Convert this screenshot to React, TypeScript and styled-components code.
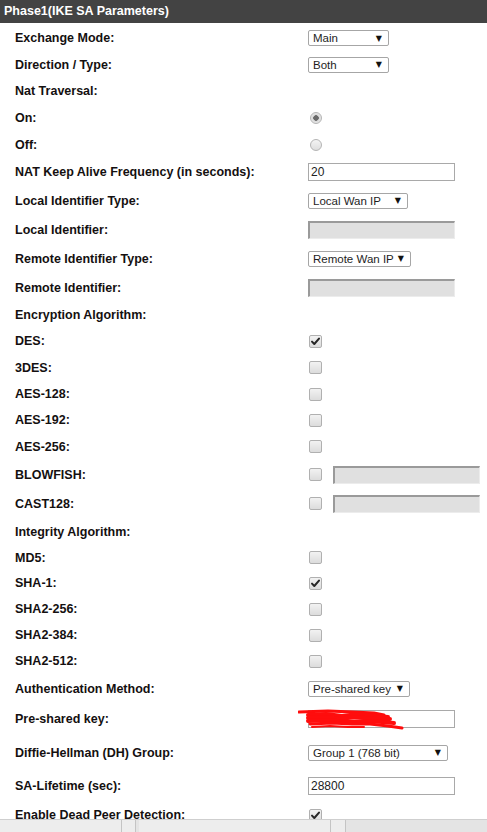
import React from 'react';
import styled, { createGlobalStyle } from 'styled-components';

const GlobalStyle = createGlobalStyle`
    html, body {
        margin: 0;
        padding: 0;
        background: #ffffff;
        overflow: hidden;
    }
    body {
        font-family: 'Liberation Sans', Arial, sans-serif;
    }
`;

const Page = styled.div`
    width: 487px;
    height: 832px;
    overflow: hidden;
`;

const SectionHeader = styled.div`
    height: 23px;
    background: #434343;
    color: #ffffff;
    font-weight: bold;
    font-size: 12.5px;
    line-height: 22px;
    padding-left: 4px;
`;

const Form = styled.div`
    display: flex;
    flex-direction: column;
    padding-top: 2px;
`;

const Row = styled.div<{ height: number }>`
    display: grid;
    grid-template-columns: 293px 1fr;
    align-items: center;
    height: ${(p) => p.height}px;
    padding-left: 15px;
`;

const Label = styled.div`
    font-weight: bold;
    font-size: 12.5px;
    color: #141010;
    white-space: nowrap;
`;

const Cell = styled.div`
    display: flex;
    align-items: center;
    gap: 11px;
`;

const SelectBox = styled.div<{ width: number }>`
    box-sizing: border-box;
    width: ${(p) => p.width}px;
    height: 16px;
    border: 1px solid #a6a6a6;
    border-radius: 2px;
    background: #ffffff;
    display: flex;
    align-items: center;
    justify-content: space-between;
    padding: 0 6px 0 4px;
    font-size: 11.5px;
    color: #1e1e1e;
    white-space: nowrap;
`;

const Arrow = styled.span`
    font-size: 8px;
    color: #111111;
    font-family: 'DejaVu Sans', sans-serif;
`;

const TextInput = styled.input`
    box-sizing: border-box;
    width: 147px;
    height: 18px;
    border: 1px solid #a9a9a9;
    padding: 0 2px;
    margin: 0;
    font-family: 'Liberation Sans', Arial, sans-serif;
    font-size: 12px;
    color: #222222;
    background: #ffffff;
    outline: none;
`;

const DisabledInput = styled.div`
    box-sizing: border-box;
    width: 147px;
    height: 18px;
    background: #e0e0e0;
    border-top: 2px solid #9a9a9a;
    border-left: 2px solid #9a9a9a;
    border-right: 1px solid #ececec;
    border-bottom: 1px solid #ececec;
`;

const Radio = styled.span<{ checked?: boolean }>`
    box-sizing: border-box;
    width: 12px;
    height: 12px;
    margin-left: 2px;
    border-radius: 50%;
    border: 1px solid #b4b4b4;
    background: ${(p) =>
        p.checked
            ? 'radial-gradient(circle, #6a6a6a 0 2.5px, #d8d8d8 3px, #eeeeee 6px)'
            : 'linear-gradient(#f4f4f4, #dedede)'};
`;

const CheckBox = styled.span`
    box-sizing: border-box;
    width: 13px;
    height: 13px;
    margin-left: 1px;
    border: 1px solid #b0b0b0;
    border-radius: 2px;
    background: linear-gradient(#f2f2f2, #dcdcdc);
    display: flex;
    align-items: center;
    justify-content: center;
`;

const KeyWrap = styled.div`
    position: relative;
    display: flex;
`;

const ScribbleSvg = styled.svg`
    position: absolute;
    left: -10px;
    top: -1px;
    pointer-events: none;
`;

const BottomBar = styled.div`
    position: fixed;
    left: 0;
    right: 0;
    bottom: 0;
    height: 12px;
    background: #e4e4e4;
    border-top: 1px solid #cfcfcf;
    display: flex;
`;

const BarCell = styled.div<{ width: number }>`
    width: ${(p) => p.width}px;
    height: 100%;
    background: #ededed;
    border-right: 1px solid #c4c4c4;
`;

const BarGap = styled.div`
    width: 3px;
    height: 100%;
`;

type RowSpec = {
    label: string;
    height: number;
    control?: React.ReactNode;
};

const Select: React.FC<{ value: string; width: number }> = ({ value, width }) => (
    <SelectBox width={width}>
        <span>{value}</span>
        <Arrow>▼</Arrow>
    </SelectBox>
);

const Checkbox: React.FC<{ checked?: boolean }> = ({ checked }) => (
    <CheckBox>
        {checked && (
            <svg width="11" height="11" viewBox="0 0 11 11">
                <path d="M2 5.6 L4.3 8 L9 2.6" fill="none" stroke="#262626" strokeWidth="2" strokeLinecap="round" strokeLinejoin="round" />
            </svg>
        )}
    </CheckBox>
);

const Scribble = () => (
    <ScribbleSvg width="110" height="22" viewBox="0 0 110 22">
        <g stroke="#ff0d0d" fill="none" strokeLinecap="round" strokeLinejoin="round">
            <path d="M1 3 L30 2 L55 3 L76 4 L86 6" strokeWidth="3" />
            <path d="M10 6 L28 5 L44 7 L60 5 L78 7 L90 8" strokeWidth="4" />
            <path d="M10 9 L26 8 L42 10 L58 8 L76 10 L92 10" strokeWidth="4" />
            <path d="M10 12 L30 11 L48 13 L66 12 L84 13 L96 14" strokeWidth="4" />
            <path d="M12 15 L34 14 L54 15 L72 15 L90 17 L104 19" strokeWidth="3" />
            <path d="M14 18 L32 17 L50 18 L66 18" strokeWidth="2" />
        </g>
    </ScribbleSvg>
);

const buildRows = (): RowSpec[] => [
    { label: 'Exchange Mode:', height: 26, control: <Select value="Main" width={81} /> },
    { label: 'Direction / Type:', height: 27, control: <Select value="Both" width={81} /> },
    { label: 'Nat Traversal:', height: 26 },
    { label: 'On:', height: 27, control: <Radio checked /> },
    { label: 'Off:', height: 27, control: <Radio /> },
    { label: 'NAT Keep Alive Frequency (in seconds):', height: 28, control: <TextInput readOnly value="20" /> },
    { label: 'Local Identifier Type:', height: 29, control: <Select value="Local Wan IP" width={100} /> },
    { label: 'Local Identifier:', height: 29, control: <DisabledInput /> },
    { label: 'Remote Identifier Type:', height: 29, control: <Select value="Remote Wan IP" width={103} /> },
    { label: 'Remote Identifier:', height: 29, control: <DisabledInput /> },
    { label: 'Encryption Algorithm:', height: 26 },
    { label: 'DES:', height: 26, control: <Checkbox checked /> },
    { label: '3DES:', height: 27, control: <Checkbox /> },
    { label: 'AES-128:', height: 26, control: <Checkbox /> },
    { label: 'AES-192:', height: 26, control: <Checkbox /> },
    { label: 'AES-256:', height: 27, control: <Checkbox /> },
    {
        label: 'BLOWFISH:',
        height: 29,
        control: (
            <>
                <Checkbox />
                <DisabledInput />
            </>
        ),
    },
    {
        label: 'CAST128:',
        height: 29,
        control: (
            <>
                <Checkbox />
                <DisabledInput />
            </>
        ),
    },
    { label: 'Integrity Algorithm:', height: 27 },
    { label: 'MD5:', height: 25, control: <Checkbox /> },
    { label: 'SHA-1:', height: 26, control: <Checkbox checked /> },
    { label: 'SHA2-256:', height: 26, control: <Checkbox /> },
    { label: 'SHA2-384:', height: 26, control: <Checkbox /> },
    { label: 'SHA2-512:', height: 26, control: <Checkbox /> },
    { label: 'Authentication Method:', height: 29, control: <Select value="Pre-shared key" width={102} /> },
    {
        label: 'Pre-shared key:',
        height: 32,
        control: (
            <KeyWrap>
                <TextInput readOnly value="" />
                <Scribble />
            </KeyWrap>
        ),
    },
    { label: 'Diffie-Hellman (DH) Group:', height: 35, control: <Select value="Group 1 (768 bit)" width={140} /> },
    { label: 'SA-Lifetime (sec):', height: 32, control: <TextInput readOnly value="28800" /> },
    { label: 'Enable Dead Peer Detection:', height: 26, control: <Checkbox checked /> },
];

export default function App() {
    const rows = buildRows();
    return (
        <>
            <GlobalStyle />
            <Page>
                <SectionHeader>Phase1(IKE SA Parameters)</SectionHeader>
                <Form>
                    {rows.map((row) => (
                        <Row key={row.label} height={row.height}>
                            <Label>{row.label}</Label>
                            <Cell>{row.control}</Cell>
                        </Row>
                    ))}
                </Form>
            </Page>
            <BottomBar>
                <BarCell width={121} />
                <BarCell width={13} />
                <BarGap />
                <BarCell width={191} />
                <BarCell width={14} />
            </BottomBar>
        </>
    );
}
